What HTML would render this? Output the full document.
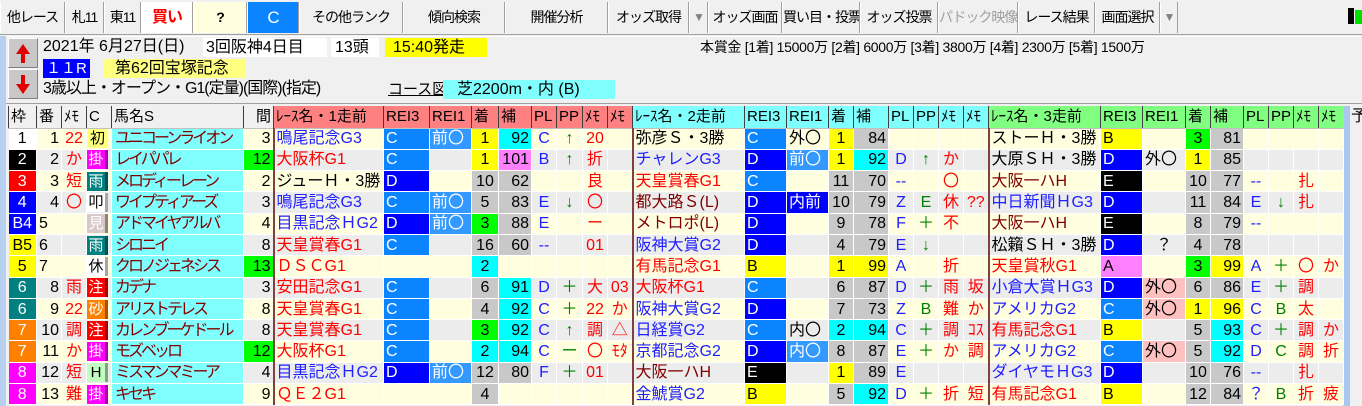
<!DOCTYPE html>
<html><head><meta charset="utf-8">
<style>
*{box-sizing:border-box;margin:0;padding:0}
body{width:1362px;height:406px;overflow:hidden;background:#f0f0f0;font-family:"Liberation Sans","Noto Sans CJK JP",sans-serif;position:relative;color:#000}
.tb{position:absolute;top:0;left:0;width:1362px;height:35px;background:#f0f0f0;border-bottom:1px solid #a0a0a0}
.b{position:absolute;top:2px;height:31px;border-right:1px solid #a0a0a0;border-left:1px solid #fff;font-size:14px;line-height:31px;text-align:center;white-space:nowrap;letter-spacing:-1px;overflow:hidden}
.ab{position:absolute;left:8px;width:30px;height:30px;background:#c8c8c8;border:1px solid #fff;border-right-color:#808080;border-bottom-color:#808080}
.it{position:absolute;font-size:16px;line-height:20px;white-space:nowrap}
table{position:absolute;left:8px;top:106px;border-collapse:collapse;table-layout:fixed;width:1335px}
tr{height:21.3px}
td,th{height:21.3px;max-height:21.3px;border-right:1px solid #fff;border-bottom:1px solid #fff;font-size:16px;font-weight:normal;white-space:nowrap;overflow:hidden;line-height:19px;padding:0 2px;vertical-align:middle}
th{height:22px;background:#f0f0f0;border-left:1px solid #404040;border-right:none;border-bottom:1px solid #c0c0c0;text-align:left;font-size:15px}
th.r1{background:#ff8080}th.r2{background:#80ffff}th.r3{background:#80ff80}
tr.o td{background:#ffffe0}tr.e td{background:#ececec}
td.w{text-align:center;color:#fff}
td.n{text-align:right}
td.m{color:#f00;text-align:center}
td.ic{padding:0}
.ic span{display:block;width:21px;height:19px;line-height:19px;text-align:center;font-size:15px;border-right:3px solid rgba(0,0,0,.35)}
tr td.hn{background:#80ffff;color:#800000;letter-spacing:-3px;padding-left:3px}
td.rn{border-left:2px solid #804040;font-size:16px;letter-spacing:0}
.G1{color:#f00}.G2{color:#2020ff}.Br{color:#800000}
tr td.C{background:#0a84ff;color:#fff}tr td.D{background:#0000ff;color:#fff}tr td.E{background:#000;color:#fff}tr td.B{background:#ff0}tr td.A{background:#ff80ff}
tr td.F{background:#3399ff;color:#fff}tr td.P{background:#ffc0c0}
tr td.g{background:#c8c8c8}tr td.y{background:#ff0}tr td.c{background:#0ff}tr td.gr{background:#00ff00}tr td.mg{background:#ff80ff}
td.ch{text-align:center}
td.pl{color:#2020ff;text-align:center}
td.pp{color:#008000;text-align:center}
td.mm{color:#f00;text-align:center}
</style></head><body>
<div class="tb">
<div class="b" style="left:0;width:65px">他レース</div>
<div class="b" style="left:65px;width:39px">札11</div>
<div class="b" style="left:104px;width:37px">東11</div>
<div class="b" style="left:141px;width:52px;background:#fff;color:#f00;font-weight:bold;font-size:16px">買い</div>
<div class="b" style="left:193px;width:54px;background:#ffffe0;font-weight:bold">?</div>
<div class="b" style="left:247px;width:52px;background:#0a84ff;color:#fff;font-size:17px">C</div>
<div class="b" style="left:299px;width:104px">その他ランク</div>
<div class="b" style="left:403px;width:102px">傾向検索</div>
<div class="b" style="left:505px;width:103px">開催分析</div>
<div class="b" style="left:608px;width:81px">オッズ取得</div>
<div class="b" style="left:689px;width:19px;color:#808080;font-size:12px">▼</div>
<div class="b" style="left:708px;width:74px">オッズ画面</div>
<div class="b" style="left:782px;width:78px">買い目・投票</div>
<div class="b" style="left:860px;width:78px">オッズ投票</div>
<div class="b" style="left:938px;width:80px;color:#a0a0a0">パドック映像</div>
<div class="b" style="left:1018px;width:77px">レース結果</div>
<div class="b" style="left:1095px;width:65px">画面選択</div>
<div class="b" style="left:1160px;width:18px;color:#808080;font-size:12px">▼</div>
<div style="position:absolute;left:1348px;top:8px;width:6px;height:16px;background:#000"></div>
<div style="position:absolute;left:1355px;top:10px;width:7px;height:14px;background:#00e000"></div>
</div>
<div style="position:absolute;left:0;top:36px;width:6px;height:370px;background:#b8d0f0"></div>
<div style="position:absolute;left:6px;top:36px;width:1356px;height:68px;border-top:1px solid #fff;border-bottom:1px solid #a0a0a0"></div>
<div class="ab" style="top:38px"><svg width="28" height="28"><path d="M14 5 L7 15 H12 V24 H16 V15 H21 Z" fill="#e00000"/></svg></div>
<div class="ab" style="top:69px"><svg width="28" height="28"><path d="M14 24 L7 14 H12 V5 H16 V14 H21 Z" fill="#e00000"/></svg></div>
<div class="it" style="left:43px;top:37px">2021年 6月27日(日)</div>
<div class="it" style="left:203px;top:38px;width:124px;height:19px;background:#fff;padding-left:3px">3回阪神4日目</div>
<div class="it" style="left:331px;top:38px;width:48px;height:19px;background:#fff;padding-left:4px">13頭</div>
<div class="it" style="left:385px;top:38px;width:102px;height:19px;background:#ff0;padding-left:8px">15:40発走</div>
<div class="it" style="left:700px;top:37px;font-size:14px;letter-spacing:-0.3px">本賞金 [1着] 15000万 [2着] 6000万 [3着] 3800万 [4着] 2300万 [5着] 1500万</div>
<div class="it" style="left:43px;top:59px;width:47px;height:19px;background:#0000ff;color:#fff;padding-left:3px;font-size:15px">１１R</div>
<div class="it" style="left:103px;top:59px;width:142px;height:19px;background:#ffff80;padding-left:12px">第62回宝塚記念</div>
<div class="it" style="left:43px;top:79px;letter-spacing:-1px">3歳以上・オープン・G1(定量)(国際)(指定)</div>
<div class="it" style="left:388px;top:80px;text-decoration:underline;font-size:15px">コース図</div>
<div class="it" style="left:443px;top:80px;width:172px;height:19px;background:#80ffff;padding-left:14px">芝2200m・内 (B)</div>
<div style="position:absolute;left:1343px;top:106px;width:7px;height:300px;background:#a8c8f0"></div>
<div class="it" style="left:1351px;top:107px">予</div>
<table>
<colgroup><col style="width:28px"><col style="width:25px"><col style="width:25px"><col style="width:25px"><col style="width:132px"><col style="width:30px"><col style="width:110px"><col style="width:46px"><col style="width:42px"><col style="width:27px"><col style="width:33px"><col style="width:25px"><col style="width:26px"><col style="width:25px"><col style="width:25px"><col style="width:112px"><col style="width:42px"><col style="width:42px"><col style="width:25px"><col style="width:35px"><col style="width:25px"><col style="width:25px"><col style="width:25px"><col style="width:25px"><col style="width:112px"><col style="width:42px"><col style="width:43px"><col style="width:25px"><col style="width:33px"><col style="width:25px"><col style="width:25px"><col style="width:25px"><col style="width:25px"></colgroup>
<tr style="height:22px"><th>枠</th><th>番</th><th>ﾒﾓ</th><th>C</th><th>馬名S</th><th style="text-align:right">間</th>
<th class="r1">ﾚｰｽ名・1走前</th><th class="r1">REI3</th><th class="r1">REI1</th><th class="r1">着</th><th class="r1">補</th><th class="r1">PL</th><th class="r1">PP</th><th class="r1">ﾒﾓ</th><th class="r1">ﾒﾓ</th>
<th class="r2">ﾚｰｽ名・2走前</th><th class="r2">REI3</th><th class="r2">REI1</th><th class="r2">着</th><th class="r2">補</th><th class="r2">PL</th><th class="r2">PP</th><th class="r2">ﾒﾓ</th><th class="r2">ﾒﾓ</th>
<th class="r3">ﾚｰｽ名・3走前</th><th class="r3">REI3</th><th class="r3">REI1</th><th class="r3">着</th><th class="r3">補</th><th class="r3">PL</th><th class="r3">PP</th><th class="r3">ﾒﾓ</th><th class="r3">ﾒﾓ</th></tr>

<tr class="o"><td class="w" style="background:#fff;color:#000">1</td><td class="n">1</td><td class="m">22</td><td class="ic"><span style="background:#ffff80;border:none">初</span></td><td class="hn">ユニコーンライオン</td><td class="n">3</td>
<td class="rn G2">鳴尾記念G3</td><td class="C">C</td><td class="F">前〇</td><td class="ch y">1</td><td class="n c">92</td><td class="pl">C</td><td class="pp">↑</td><td class="mm">20</td><td></td>
<td class="rn">弥彦Ｓ・3勝</td><td class="C">C</td><td>外〇</td><td class="ch y">1</td><td class="n g">84</td><td></td><td></td><td></td><td></td>
<td class="rn">ストーＨ・3勝</td><td class="B">B</td><td></td><td class="ch gr">3</td><td class="n g">81</td><td></td><td></td><td></td><td></td></tr>

<tr class="e"><td class="w" style="background:#000">2</td><td class="n">2</td><td class="m">か</td><td class="ic"><span style="background:#ff00ff;color:#fff">掛</span></td><td class="hn">レイパパレ</td><td class="n gr">12</td>
<td class="rn G1">大阪杯G1</td><td class="C">C</td><td></td><td class="ch y">1</td><td class="n mg">101</td><td class="pl">B</td><td class="pp">↑</td><td class="mm">折</td><td></td>
<td class="rn G2">チャレンG3</td><td class="D">D</td><td class="F">前〇</td><td class="ch y">1</td><td class="n c">92</td><td class="pl">D</td><td class="pp">↑</td><td class="mm">か</td><td></td>
<td class="rn">大原ＳＨ・3勝</td><td class="D">D</td><td>外〇</td><td class="ch y">1</td><td class="n g">85</td><td></td><td></td><td></td><td></td></tr>

<tr class="o"><td class="w" style="background:#f00">3</td><td class="n">3</td><td class="m">短</td><td class="ic"><span style="background:#008080;color:#fff">雨</span></td><td class="hn">メロディーレーン</td><td class="n">2</td>
<td class="rn">ジューＨ・3勝</td><td class="D">D</td><td></td><td class="ch g">10</td><td class="n g">62</td><td></td><td></td><td class="mm">良</td><td></td>
<td class="rn G1">天皇賞春G1</td><td class="C">C</td><td></td><td class="ch g">11</td><td class="n g">70</td><td class="pl">--</td><td></td><td class="mm">〇</td><td></td>
<td class="rn Br">大阪一ハH</td><td class="E">E</td><td></td><td class="ch g">10</td><td class="n g">77</td><td class="pl">--</td><td></td><td class="mm">扎</td><td></td></tr>

<tr class="e"><td class="w" style="background:#0000ff">4</td><td class="n">4</td><td class="m">〇</td><td class="ic"><span style="background:#fff">叩</span></td><td class="hn">ワイプティアーズ</td><td class="n">3</td>
<td class="rn G2">鳴尾記念G3</td><td class="C">C</td><td class="F">前〇</td><td class="ch g">5</td><td class="n g">83</td><td class="pl">E</td><td class="pp">↓</td><td class="mm">〇</td><td></td>
<td class="rn Br">都大路Ｓ(L)</td><td class="D">D</td><td class="D">内前</td><td class="ch g">10</td><td class="n g">79</td><td class="pl">Z</td><td class="pp">E</td><td class="mm">休</td><td class="mm">??</td>
<td class="rn G2">中日新聞ＨG3</td><td class="D">D</td><td></td><td class="ch g">11</td><td class="n g">84</td><td class="pl">E</td><td class="pp">↓</td><td class="mm">扎</td><td></td></tr>

<tr class="o"><td class="w" style="background:#0000ff">B4</td><td class="n" style="text-align:left">5</td><td class="m"></td><td class="ic"><span style="background:#d8c8c8;color:#fff">見</span></td><td class="hn">アドマイヤアルバ</td><td class="n">4</td>
<td class="rn G2">目黒記念ＨG2</td><td class="D">D</td><td class="F">前〇</td><td class="ch gr">3</td><td class="n g">88</td><td class="pl">E</td><td></td><td class="mm">ー</td><td></td>
<td class="rn Br">メトロポ(L)</td><td class="D">D</td><td></td><td class="ch g">9</td><td class="n g">78</td><td class="pl">F</td><td class="pp">＋</td><td class="mm">不</td><td></td>
<td class="rn Br">大阪一ハH</td><td class="E">E</td><td></td><td class="ch g">8</td><td class="n g">79</td><td class="pl">--</td><td></td><td></td><td></td></tr>

<tr class="e"><td class="w" style="background:#ff0;color:#000">B5</td><td class="n" style="text-align:left">6</td><td class="m"></td><td class="ic"><span style="background:#008080;color:#fff">雨</span></td><td class="hn">シロニイ</td><td class="n">8</td>
<td class="rn G1">天皇賞春G1</td><td class="C">C</td><td></td><td class="ch g">16</td><td class="n g">60</td><td class="pl">--</td><td></td><td class="mm">01</td><td></td>
<td class="rn G2">阪神大賞G2</td><td class="D">D</td><td></td><td class="ch g">4</td><td class="n g">79</td><td class="pl">E</td><td class="pp">↓</td><td></td><td></td>
<td class="rn">松籟ＳＨ・3勝</td><td class="D">D</td><td class="ch">？</td><td class="ch g">4</td><td class="n g">78</td><td></td><td></td><td></td><td></td></tr>

<tr class="o"><td class="w" style="background:#ff0;color:#000">5</td><td class="n" style="text-align:left">7</td><td class="m"></td><td class="ic"><span style="background:#fff">休</span></td><td class="hn">クロノジェネシス</td><td class="n gr">13</td>
<td class="rn G1">ＤＳＣG1</td><td></td><td></td><td class="ch c">2</td><td></td><td></td><td></td><td></td><td></td>
<td class="rn G1">有馬記念G1</td><td class="B">B</td><td></td><td class="ch y">1</td><td class="n y">99</td><td class="pl">A</td><td></td><td class="mm">折</td><td></td>
<td class="rn G1">天皇賞秋G1</td><td class="A">A</td><td></td><td class="ch gr">3</td><td class="n y">99</td><td class="pl">A</td><td class="pp">＋</td><td class="mm">〇</td><td class="mm">か</td></tr>

<tr class="e"><td class="w" style="background:#008080">6</td><td class="n">8</td><td class="m">雨</td><td class="ic"><span style="background:#f00;color:#fff">注</span></td><td class="hn">カデナ</td><td class="n">3</td>
<td class="rn G1">安田記念G1</td><td class="C">C</td><td></td><td class="ch g">6</td><td class="n c">91</td><td class="pl">D</td><td class="pp">＋</td><td class="mm">大</td><td class="mm">03</td>
<td class="rn G1">大阪杯G1</td><td class="C">C</td><td></td><td class="ch g">6</td><td class="n g">87</td><td class="pl">D</td><td class="pp">＋</td><td class="mm">雨</td><td class="mm">坂</td>
<td class="rn G2">小倉大賞ＨG3</td><td class="D">D</td><td class="P">外〇</td><td class="ch g">6</td><td class="n g">86</td><td class="pl">E</td><td class="pp">＋</td><td class="mm">調</td><td></td></tr>

<tr class="o"><td class="w" style="background:#008080">6</td><td class="n">9</td><td class="m">22</td><td class="ic"><span style="background:#ff8000;color:#fff">砂</span></td><td class="hn">アリストテレス</td><td class="n">8</td>
<td class="rn G1">天皇賞春G1</td><td class="C">C</td><td></td><td class="ch g">4</td><td class="n c">92</td><td class="pl">C</td><td class="pp">＋</td><td class="mm">22</td><td class="mm">か</td>
<td class="rn G2">阪神大賞G2</td><td class="D">D</td><td></td><td class="ch g">7</td><td class="n g">73</td><td class="pl">Z</td><td class="pp">B</td><td class="mm">難</td><td class="mm">か</td>
<td class="rn G2">アメリカG2</td><td class="C">C</td><td class="P">外〇</td><td class="ch y">1</td><td class="n y">96</td><td class="pl">C</td><td class="pp">B</td><td class="mm">太</td><td></td></tr>

<tr class="e"><td class="w" style="background:#ff8000">7</td><td class="n">10</td><td class="m">調</td><td class="ic"><span style="background:#f00;color:#fff">注</span></td><td class="hn">カレンブーケドール</td><td class="n">8</td>
<td class="rn G1">天皇賞春G1</td><td class="C">C</td><td></td><td class="ch gr">3</td><td class="n c">92</td><td class="pl">C</td><td class="pp">↑</td><td class="mm">調</td><td class="mm">△</td>
<td class="rn G2">日経賞G2</td><td class="C">C</td><td>内〇</td><td class="ch c">2</td><td class="n c">94</td><td class="pl">C</td><td class="pp">＋</td><td class="mm">調</td><td class="mm">ｺｽ</td>
<td class="rn G1">有馬記念G1</td><td class="B">B</td><td></td><td class="ch g">5</td><td class="n c">93</td><td class="pl">C</td><td class="pp">＋</td><td class="mm">調</td><td class="mm">か</td></tr>

<tr class="o"><td class="w" style="background:#ff8000">7</td><td class="n">11</td><td class="m">か</td><td class="ic"><span style="background:#ff00ff;color:#fff">掛</span></td><td class="hn">モズベッロ</td><td class="n gr">12</td>
<td class="rn G1">大阪杯G1</td><td class="C">C</td><td></td><td class="ch c">2</td><td class="n c">94</td><td class="pl">C</td><td class="pp">ー</td><td class="mm">〇</td><td class="mm">ﾓﾀ</td>
<td class="rn G2">京都記念G2</td><td class="D">D</td><td class="F">内〇</td><td class="ch g">8</td><td class="n g">87</td><td class="pl">E</td><td class="pp">＋</td><td class="mm">か</td><td class="mm">調</td>
<td class="rn G2">アメリカG2</td><td class="C">C</td><td class="P">外〇</td><td class="ch g">5</td><td class="n c">92</td><td class="pl">D</td><td class="pp">C</td><td class="mm">調</td><td class="mm">折</td></tr>

<tr class="e"><td class="w" style="background:#ff00ff">8</td><td class="n">12</td><td class="m">短</td><td class="ic"><span style="background:#c0ffc0">H</span></td><td class="hn">ミスマンマミーア</td><td class="n">4</td>
<td class="rn G2">目黒記念ＨG2</td><td class="D">D</td><td class="F">前〇</td><td class="ch g">12</td><td class="n g">80</td><td class="pl">F</td><td class="pp">＋</td><td class="mm">01</td><td></td>
<td class="rn Br">大阪一ハH</td><td class="E">E</td><td></td><td class="ch y">1</td><td class="n g">89</td><td class="pl">E</td><td></td><td></td><td></td>
<td class="rn G2">ダイヤモＨG3</td><td class="D">D</td><td></td><td class="ch g">10</td><td class="n g">76</td><td class="pl">--</td><td></td><td class="mm">扎</td><td></td></tr>

<tr class="o"><td class="w" style="background:#ff00ff">8</td><td class="n">13</td><td class="m">難</td><td class="ic"><span style="background:#ff00ff;color:#fff">掛</span></td><td class="hn">キセキ</td><td class="n">9</td>
<td class="rn G1">ＱＥ２G1</td><td></td><td></td><td class="ch g">4</td><td></td><td></td><td></td><td></td><td></td>
<td class="rn G2">金鯱賞G2</td><td class="B">B</td><td></td><td class="ch g">5</td><td class="n c">92</td><td class="pl">D</td><td class="pp">＋</td><td class="mm">折</td><td class="mm">短</td>
<td class="rn G1">有馬記念G1</td><td class="B">B</td><td></td><td class="ch g">12</td><td class="n g">84</td><td class="pl">？</td><td class="pp">B</td><td class="mm">折</td><td class="mm">疲</td></tr>
</table>
</body></html>
